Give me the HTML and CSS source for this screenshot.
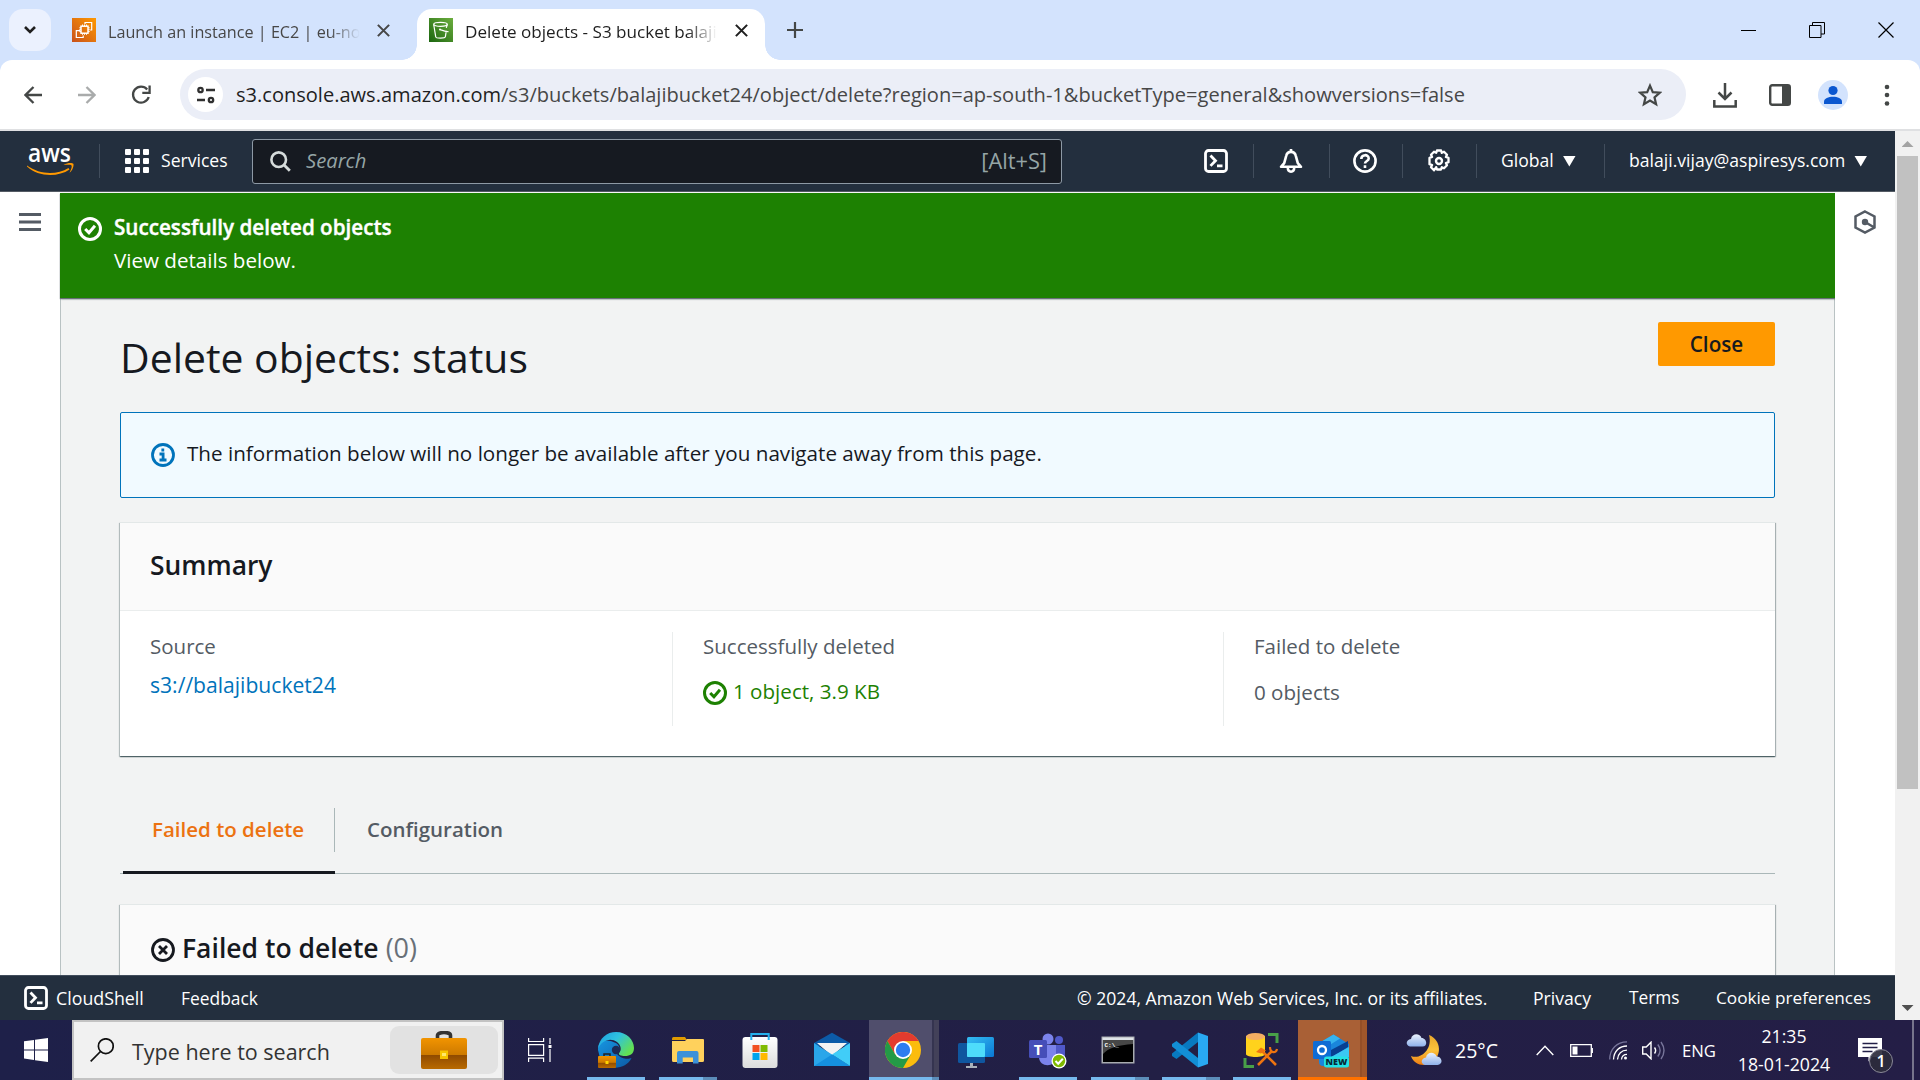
FILE: index.html
```html
<!DOCTYPE html>
<html lang="en">
<head>
<meta charset="utf-8">
<title>Delete objects - S3 bucket balajibucket24</title>
<link rel="stylesheet" href="styles.css">
</head>
<body>
<svg class="defs" aria-hidden="true">
  <defs>
    <symbol id="check-circle" viewBox="0 0 16 16"><g fill="none" stroke="currentColor" stroke-width="2"><circle cx="8" cy="8" r="7"/><path d="M4.800 8l2.500 2.500 4-4.600"/></g></symbol>
    <symbol id="shell" viewBox="0 0 24 24"><rect x="1.500" y="1.500" width="21" height="21" rx="3" fill="none" stroke="currentColor" stroke-width="2.800"/><path d="M6.500 6.500l5 5.200-5 5.200M13 16.800h5.500" fill="none" stroke="currentColor" stroke-width="2.800"/></symbol>
    <symbol id="close" viewBox="0 0 16 16"><path d="M2 2l12 12M14 2L2 14" fill="none" stroke="currentColor" stroke-width="2.200"/></symbol>
    <linearGradient id="gOrange" x1="0" y1="1" x2="1" y2="0"><stop offset="0" stop-color="#c8511b"/><stop offset="1" stop-color="#f90"/></linearGradient>
    <linearGradient id="gGreen" x1="0" y1="1" x2="1" y2="0"><stop offset="0" stop-color="#1b660f"/><stop offset="1" stop-color="#6cae3e"/></linearGradient>
    <linearGradient id="gCase" x1="0" y1="0" x2="0" y2="1"><stop offset="0" stop-color="#f29400"/><stop offset=".54" stop-color="#cd7a00"/><stop offset=".55" stop-color="#8f4a00"/><stop offset="1" stop-color="#b96a00"/></linearGradient>
    <linearGradient id="gEdge" x1="0" y1="0" x2="1" y2=".6"><stop offset="0" stop-color="#1b9de2"/><stop offset=".5" stop-color="#2fc2df"/><stop offset="1" stop-color="#63e052"/></linearGradient>
    <linearGradient id="gEdge2" x1="0" y1="0" x2="1" y2="1"><stop offset="0" stop-color="#1695e0"/><stop offset="1" stop-color="#0c59a4"/></linearGradient>
    <linearGradient id="gSky" x1="0" y1="0" x2="1" y2="1"><stop offset="0" stop-color="#35bdf2"/><stop offset="1" stop-color="#0a78d4"/></linearGradient>
    <linearGradient id="gCloud" x1="0" y1="0" x2="0" y2="1"><stop offset="0" stop-color="#e9f1fd"/><stop offset="1" stop-color="#8fb1ea"/></linearGradient>
    <linearGradient id="gMoon" x1="0" y1="0" x2="0" y2="1"><stop offset="0" stop-color="#e9a72b"/><stop offset=".5" stop-color="#fbc33c"/><stop offset="1" stop-color="#ee7d12"/></linearGradient>
    <linearGradient id="gBag" x1="0" y1="0" x2="0" y2="1"><stop offset="0" stop-color="#fff"/><stop offset="1" stop-color="#dcdcdc"/></linearGradient>
  </defs>
</svg>

<header class="tabstrip">
  <button class="tab-search"><svg width="14" height="10" viewBox="0 0 14 10"><path d="M2 2l5 5 5-5" fill="none" stroke="#1f1f1f" stroke-width="2.600"/></svg></button>
  <div class="tab tab-idle">
    <svg width="24" height="24" viewBox="0 0 24 24"><rect width="24" height="24" fill="url(#gOrange)"/><g fill="none" stroke="#fff" stroke-width="1.200"><rect x="9" y="8.200" width="7" height="7" stroke-width="1.500"/><path d="M10.500 6.500v1.500M12.500 6.500v1.500M14.500 6.500v1.500M10.500 15.200v1.600M12.500 15.200v1.600M14.500 15.200v1.600M7.300 9.800H9M7.300 11.700H9M7.300 13.600H9M16 9.800h1.700M16 11.700h1.700M16 13.600h1.700" stroke-width="1"/><path d="M13 6V4.500h6.700V12h-1.500M8 12.700H4.300v6.800h6.900V17.500"/></g></svg>
    <span class="tab-title">Launch an instance | EC2 | eu-north-1</span>
    <svg class="x" width="15" height="15"><use href="#close"/></svg>
  </div>
  <div class="tab tab-active">
    <svg width="24" height="24" viewBox="0 0 24 24"><rect width="24" height="24" fill="url(#gGreen)"/><g fill="none" stroke="#fff" stroke-width="1.200"><ellipse cx="11.500" cy="6.300" rx="6.800" ry="2"/><path d="M4.700 6.500l2 12.200c.2 1.900 9.400 1.900 9.700 0l.9-6M17.300 9.800l1-3.500M11 11.500c3 1 5.500 2.100 8.500 2.200"/></g><circle cx="11" cy="11.500" r="1" fill="#fff"/></svg>
    <span class="tab-title">Delete objects - S3 bucket balajibucket24</span>
    <svg class="x" width="15" height="15"><use href="#close"/></svg>
  </div>
  <svg class="plus" width="16" height="16"><path d="M8 0v16M0 8h16" stroke="#444746" stroke-width="2.200"/></svg>
  <div class="window-controls">
    <svg width="15" height="16"><path d="M0 8.500h15" stroke="#000"/></svg>
    <svg width="16" height="16"><path d="M.5 3.500h11.500v12H.5zM3.500 3.500v-3H15.500v11.500H12" fill="none" stroke="#000"/></svg>
    <svg width="16" height="16"><path d="M.5 .5l15 15M15.500 .5l-15 15" stroke="#000" stroke-width="1.200"/></svg>
  </div>
</header>

<nav class="toolbar">
  <svg class="nav-back" width="18" height="18" viewBox="0 0 18 18"><path d="M18 9H2M9.500 1L1.500 9l8 8" fill="none" stroke="#444746" stroke-width="2.300"/></svg>
  <svg class="nav-fwd" width="18" height="18" viewBox="0 0 18 18"><path d="M0 9h16M8.500 1l8 8-8 8" fill="none" stroke="#a9abab" stroke-width="2.300"/></svg>
  <svg class="nav-reload" width="20" height="20" viewBox="0 0 20 20"><path d="M16.200 4.500A8 8 0 1 0 17.700 12" fill="none" stroke="#444746" stroke-width="2.300"/><path d="M18.600 .5v7.300h-7.300" fill="none" stroke="#444746" stroke-width="2.300"/></svg>
  <div class="omnibox">
    <span class="site-info"><svg width="18" height="18" viewBox="0 0 18 18" fill="none" stroke="#303030" stroke-width="2.300"><circle cx="3.500" cy="4" r="2.200"/><path d="M9 4h9M0 14h8"/><circle cx="14" cy="14" r="2.200"/></svg></span>
    <span class="url">s3.console.aws.amazon.com<span class="path">/s3/buckets/balajibucket24/object/delete?region=ap-south-1&amp;bucketType=general&amp;showversions=false</span></span>
    <svg class="star" width="24" height="24" viewBox="0 0 24 24"><path d="M12 2.600l2.800 6.500 7 .6-5.300 4.600 1.600 6.900-6.100-3.700-6.100 3.700 1.600-6.900-5.300-4.600 7-.6z" fill="none" stroke="#444746" stroke-width="2.200"/></svg>
  </div>
  <div class="toolbar-icons">
    <svg width="24" height="26" viewBox="0 0 24 26"><path d="M12 1v15M5.500 10.500l6.500 6.500 6.500-6.500M1.300 18v6.500h21.400V18" fill="none" stroke="#444746" stroke-width="2.500"/></svg>
    <svg width="22" height="22" viewBox="0 0 22 22"><rect x="1.200" y="1.200" width="19.600" height="19.600" rx="2" fill="none" stroke="#444746" stroke-width="2.400"/><path d="M13 1h8v20h-8z" fill="#444746"/></svg>
    <svg width="30" height="30" viewBox="0 0 30 30"><circle cx="15" cy="15" r="15" fill="#d3e3fd"/><circle cx="15" cy="10.500" r="4.600" fill="#0b57d0"/><path d="M6 24v-2.500C6 15 24 15 24 21.500V24z" fill="#0b57d0"/></svg>
    <svg width="6" height="22" viewBox="0 0 6 22" fill="#444746"><circle cx="3" cy="3" r="2.300"/><circle cx="3" cy="11" r="2.300"/><circle cx="3" cy="19.500" r="2.300"/></svg>
  </div>
</nav>

<div class="viewport">
  <div class="page">
    <header class="aws-nav">
      <svg class="aws-logo" width="48" height="32" viewBox="0 0 48 32"><text x="1" y="16.500" textLength="43" lengthAdjust="spacingAndGlyphs" class="aws-word">aws</text><path d="M0 20.500c13 9.500 30 9.500 41.500 2.500l1 1.500C31 32.500 11 32 0 21.500z" fill="#f90"/><path d="M36.500 20c4-2.500 9-2.200 9.800-1.200s-.4 6.700-3.800 9c2-4 2.600-6.500 2-7.300s-4.500-.8-8-.5z" fill="#f90"/></svg>
      <i class="sep"></i>
      <svg class="grid-icon" width="24" height="24" fill="#fff"><rect width="6" height="6" rx="1"/><rect x="9" width="6" height="6" rx="1"/><rect x="18" width="6" height="6" rx="1"/><rect y="9" width="6" height="6" rx="1"/><rect x="9" y="9" width="6" height="6" rx="1"/><rect x="18" y="9" width="6" height="6" rx="1"/><rect y="18" width="6" height="6" rx="1"/><rect x="9" y="18" width="6" height="6" rx="1"/><rect x="18" y="18" width="6" height="6" rx="1"/></svg>
      <span class="services">Services</span>
      <div class="search">
        <svg width="21" height="21" viewBox="0 0 21 21"><circle cx="8.700" cy="8.700" r="7.300" fill="none" stroke="#d5dbdb" stroke-width="2.600"/><path d="M13.800 13.800l6 6" stroke="#d5dbdb" stroke-width="2.800"/></svg>
        <em>Search</em><span>[Alt+S]</span>
      </div>
      <div class="nav-cell shell"><svg width="24" height="24"><use href="#shell"/></svg></div>
      <div class="nav-cell bell"><svg width="24" height="24" viewBox="0 0 24 24" fill="none" stroke="#fff" stroke-width="2.600"><path d="M2 17.800l3.200-3.600 2-7.400C8.500 1.500 15.500 1.500 16.800 6.800l2 7.400 3.200 3.600z" stroke-linejoin="round"/><path d="M8.800 18.500c0 5.500 6.400 5.500 6.400 0M12 0v3"/></svg></div>
      <div class="nav-cell help"><svg width="24" height="24" viewBox="0 0 24 24" fill="none" stroke="#fff" stroke-width="2.600"><circle cx="12" cy="12" r="10.600"/><path d="M8.300 10c0-5 7.400-5 7.400-.6 0 2.600-3.700 2.600-3.700 5.200M12 16.300v2.600"/></svg></div>
      <div class="nav-cell gear"><svg width="24" height="24" viewBox="0 0 24 24" fill="none" stroke="#fff"><path d="M9.900 1.500h4.200l.7 2.300 2.200-1.100 3 3-1.100 2.200 2.600.9v4.400l-2.600.9 1.100 2.200-3 3-2.200-1.100-.7 2.300H9.900l-.7-2.300L7 21.300l-3-3 1.100-2.200-2.600-.9V8.800l2.600-.9L4 5.700l3-3 2.200 1.100z" stroke-width="2.300" stroke-linejoin="round"/><circle cx="12" cy="12" r="3" stroke-width="2.400"/></svg></div>
      <div class="nav-cell region"><span>Global</span><i class="caret"></i></div>
      <div class="account"><span>balaji.vijay@aspiresys.com</span><i class="caret"></i></div>
    </header>

    <div class="shell-row">
      <aside class="rail"><svg width="22" height="18" class="burger"><path d="M0 1.500h22M0 9h22M0 16.500h22" stroke="#545b64" stroke-width="2.800"/></svg></aside>
      <main class="content">
        <section class="flash">
          <svg width="24" height="24"><use href="#check-circle"/></svg>
          <div><strong>Successfully deleted objects</strong><p>View details below.</p></div>
        </section>
        <div class="body">
          <div class="title-row"><h1>Delete objects: status</h1><button class="primary">Close</button></div>
          <div class="alert">
            <svg width="24" height="24" viewBox="0 0 24 24" fill="none" stroke="#0073bb" stroke-width="2.800"><circle cx="12" cy="12" r="10.500"/><path d="M11.800 5.500v3M8.500 11h3.600v6M8.500 17h7"/></svg>
            <span>The information below will no longer be available after you navigate away from this page.</span>
          </div>
          <section class="card summary">
            <h2>Summary</h2>
            <div class="cols">
              <div class="col"><label>Source</label><a>s3://balajibucket24</a></div>
              <div class="col"><label>Successfully deleted</label><p class="ok"><svg width="24" height="24"><use href="#check-circle"/></svg><span>1 object, 3.9 KB</span></p></div>
              <div class="col"><label>Failed to delete</label><p>0 objects</p></div>
            </div>
          </section>
          <div class="tabs"><div class="t t-on"><span>Failed to delete</span></div><div class="t"><span>Configuration</span></div></div>
          <section class="card failed">
            <h2><svg width="24" height="24" viewBox="0 0 24 24" fill="none" stroke="#16191f" stroke-width="2.800"><circle cx="12" cy="12" r="10.500"/><path d="M8 8l8 8M16 8l-8 8"/></svg>Failed to delete <small>(0)</small></h2>
          </section>
        </div>
      </main>
      <aside class="rail rail-right"><svg width="22" height="24" viewBox="0 0 22 24" fill="none" stroke="#545b64" stroke-width="2.500"><path d="M11 1.500l9.500 5v11L11 22.500l-9.500-5v-11zM11 12l8.500 5"/><circle cx="11" cy="12" r="3.200" fill="#545b64" stroke="none"/></svg></aside>
    </div>

    <footer class="aws-footer">
      <svg width="24" height="24"><use href="#shell"/></svg>
      <span class="cs">CloudShell</span><span class="fb">Feedback</span>
      <span class="copy">© 2024, Amazon Web Services, Inc. or its affiliates.</span>
      <span class="pv">Privacy</span><span class="tm">Terms</span><span class="ck">Cookie preferences</span>
    </footer>
  </div>
  <div class="scrollbar"><i class="up"></i><div class="thumb"></div><i class="down"></i></div>
</div>

<div class="taskbar">
  <div class="start"><svg width="24" height="24" viewBox="0 0 24 24" fill="#fff"><path d="M0 3.300l10-1.400v9.500H0zM11 1.700L24 0v11.400H11zM0 12.500h10V22L0 20.600zM11 12.500h13V24l-13-1.800z"/></svg></div>
  <div class="tsearch">
    <svg width="24" height="24" viewBox="0 0 24 24" fill="none" stroke="#111" stroke-width="1.700"><circle cx="15.800" cy="8.200" r="7.400"/><path d="M10.500 13.500L.7 23.300"/></svg>
    <span>Type here to search</span>
    <div class="pill"><svg width="46" height="38" viewBox="0 0 46 38"><path d="M16.500 8V4.500c0-4 13-4 13 0V8" fill="none" stroke="#333" stroke-width="3.600"/><rect y="7" width="46" height="31" rx="2" fill="url(#gCase)"/><rect x="19" y="19.500" width="8" height="8.500" fill="#f7c600"/><rect x="21" y="22" width="4" height="3" fill="#ffe96b"/></svg></div>
  </div>
  <svg class="taskview" width="24" height="24" viewBox="0 0 24 24" fill="none" stroke="#fff" stroke-width="1.200"><path d="M.6 0v3.500h15V0M.6 24v-3.800h15V24M.6 6.700h15v10.600H.6zM22 0v6M22 11v13"/><path d="M20.500 7h3v3h-3z" fill="#fff" stroke="none"/></svg>
  <div class="apps">
    <div class="app run"><svg width="36" height="36" viewBox="0 0 36 36"><path d="M0 18C0 5 12 8 18 11c5 3 4 10 1 11 5 6 12 5 14.500 4C28 38 8 40 2 26z" fill="url(#gEdge2)"/><path d="M0 17C1 6 9 0 18 0c11 0 18 8 18 16 0 6-4 8-9 8-4 0-7-1-6-3 3-3 2-8-2-11C12 5 3 9 0 17z" fill="url(#gEdge)"/><circle cx="18" cy="18" r="4.200" fill="#1c2a55"/><path d="M6 24v-2h6v2" fill="none" stroke="#222" stroke-width="1.500"/><rect y="24" width="18" height="12" rx="1" fill="url(#gCase)"/><rect x="7.500" y="29" width="3" height="3" fill="#ffd400"/></svg></div>
    <div class="app run multi"><svg width="36" height="36" viewBox="0 0 36 36"><path d="M2 6.500Q2 5 3.500 5H15l2 3H2z" fill="#e09b00"/><path d="M2 9h13l2-2h16q1 0 1 1v20.500q0 1.500-1.500 1.500h-29Q2 30 2 28.500z" fill="#ffd15c"/><path d="M7 31.500V21q0-2 2-2h17.500q2 0 2 2v10.500H23V25.500H12.700v6z" fill="#3c91d9"/></svg></div>
    <div class="app"><svg width="36" height="36" viewBox="0 0 36 36"><rect x=".5" y="5" width="35" height="31" rx="3" fill="url(#gBag)"/><path d="M9.300 8V2h17.400v6" fill="none" stroke="#24b0ec" stroke-width="2"/><path d="M10.500 13h7v7h-7z" fill="#f25022"/><path d="M18.500 13h7v7h-7z" fill="#7fba00"/><path d="M10.500 21h7v7h-7z" fill="#00a4ef"/><path d="M18.500 21h7v7h-7z" fill="#ffb900"/></svg></div>
    <div class="app"><svg width="36" height="36" viewBox="0 0 36 36"><path d="M0 11L18 .8 36 11v3H0z" fill="#0c5ba8"/><path d="M3 11h30L18 24z" fill="#f3f3f3"/><path d="M0 11l18 11.500L36 34H0z" fill="#2aa6ea"/><path d="M36 11v23L18 22.500z" fill="#41cdf8"/><path d="M0 34l18-11.500L36 34z" fill="#1590df"/></svg></div>
    <div class="app active"><svg width="36" height="36" viewBox="0 0 36 36"><circle cx="18" cy="18" r="18" fill="#fbbc0d"/><path d="M18 9h15.600A18 18 0 0 0 2.400 9L10.200 22.500 18 18z" fill="#e33b2e"/><path d="M2.400 9A18 18 0 0 0 18 36l7.800-13.500L18 18l-7.800 4.500z" fill="#249a47"/><circle cx="18" cy="18" r="9" fill="#fff"/><circle cx="18" cy="18" r="7.200" fill="#2d7df0"/></svg></div>
    <div class="app"><svg width="36" height="36" viewBox="0 0 36 36"><rect y="11" width="27" height="20" rx="1.500" fill="#0f569f"/><rect x="9" y="5" width="27" height="20" rx="1.500" fill="url(#gSky)"/><rect x="9" y="11" width="18" height="14" rx="1" fill="#4edcfb"/><path d="M12 31h3v3h4v2H8v-2h4z" fill="#a9b2ba"/></svg></div>
    <div class="app run teams"><svg width="38" height="38" viewBox="0 0 38 38"><circle cx="19" cy="8" r="5.500" fill="#7b83eb"/><circle cx="30" cy="9" r="4" fill="#5059c9"/><path d="M24 14h12v10c0 8-12 8-12 0z" fill="#5059c9"/><path d="M10 14h17v12c0 11-17 11-17 0z" fill="#7b83eb"/><rect x="0" y="9" width="18" height="18" rx="1.500" fill="#464eb8"/><text x="9" y="23.500" text-anchor="middle" class="glyph" fill="#fff">T</text><circle cx="30" cy="30" r="7.500" fill="#fff"/><circle cx="30" cy="30" r="6.200" fill="#7fba00"/><path d="M26.500 30l2.700 2.700 4.600-5" fill="none" stroke="#fff" stroke-width="2"/></svg></div>
    <div class="app run multi cmd"><svg width="36" height="36" viewBox="0 0 36 36"><rect x="1.500" y="4.500" width="33" height="27" fill="#a8acb0"/><rect x="2.500" y="5.500" width="31" height="2.500" fill="#dfe4e8"/><rect x="3" y="8" width="30" height="22" fill="#000"/><path d="M3 8h30v4C18 13 8 16 3 22z" fill="#474747"/><text x="4.500" y="14.500" class="prompt" fill="#fff">C:\_</text></svg></div>
    <div class="app run multi"><svg width="36" height="36" viewBox="0 0 36 36"><path d="M26 .5L36 4v28l-10 3.500z" fill="#29a9f2"/><path d="M26 .5V10L4.500 27 0 24v-2.500z" fill="#0879bf"/><path d="M26 35.500V26L4.500 9 0 12v2.500z" fill="#128fd6"/></svg></div>
    <div class="app run"><svg width="36" height="36" viewBox="0 0 36 36"><path d="M25 2.500h9V11M2 26v8.500h9" fill="none" stroke="#48a048" stroke-width="3"/><path d="M3 4v18c0 4 19 4 19 0V4z" fill="#ffd21c"/><ellipse cx="12.500" cy="4.500" rx="9.500" ry="3.500" fill="#f4ae62"/><path d="M15 33l14-14M33 33L18 18" stroke="#ee7410" stroke-width="2.600"/><path d="M13 20l5-4.500 5 3-5 3z" fill="#ee7410"/><path d="M27 15c0 6 6 7 7 2" fill="none" stroke="#ee7410" stroke-width="2.200"/></svg></div>
    <div class="app alerting"><svg width="36" height="36" viewBox="0 0 36 36"><path d="M6 11L20.500 2.500 36 12v18c0 3-2 4-4 4H10c-3 0-4-2-4-4z" fill="#1a86dc"/><path d="M6 11L20.500 2.500 27 6.500 12 16z" fill="#36b3ef"/><path d="M18 18L35 9v6L18 26z" fill="#083f91"/><path d="M18 25l18-10v10z" fill="#3bc8f4"/><rect y="9" width="18" height="18" rx="1.500" fill="#0f6cd4"/><circle cx="9" cy="18" r="4" fill="none" stroke="#fff" stroke-width="2.300"/><rect x="11" y="24.500" width="25" height="11" rx="2.500" fill="#22e2e4"/><text x="23.500" y="33.200" text-anchor="middle" class="new" fill="#052a38">NEW</text></svg></div>
  </div>
  <svg class="weather" width="37" height="36" viewBox="0 0 37 36"><path d="M23 3c13 5 13 22 2 28-7 4-17 2-20-7 10 4 22-7 18-21z" fill="url(#gMoon)"/><path d="M4 14.500c-5-1-4-7 1-7.500 1-6 9-6 10.500-1 5 0 7 8 1 8.500z" fill="url(#gCloud)"/><path d="M19 33c-5-1-4-7 1-7.500 1-6 9-6 10.500-1 6 0 7 8 1 8.500z" fill="url(#gCloud)"/></svg>
  <span class="temp">25°C</span>
  <svg class="chev" width="18" height="11" viewBox="0 0 18 11"><path d="M.7 10L9 1.300l8.300 8.700" fill="none" stroke="#fff" stroke-width="1.400"/></svg>
  <svg class="batt" width="23" height="13" viewBox="0 0 23 13"><path d="M.7 .7h20.600v11.600H.7z" fill="none" stroke="#fff" stroke-width="1.300"/><path d="M22.300 4v5" stroke="#fff" stroke-width="1.300"/><path d="M2.500 2.500h5v8h-5z" fill="#fff"/></svg>
  <svg class="wifi" width="19" height="19" viewBox="0 0 19 19" fill="none" stroke-width="1.300"><path d="M.7 18.500C.7 8 8 .8 18 .8" stroke="#77759a"/><path d="M4.500 18.500C5 10 10.500 5 18 5M8.500 18.500c.3-5.500 4-9.300 9.500-9.300M12.500 18.500c.3-3.300 2.400-5.200 5.500-5.200" stroke="#fff"/><circle cx="16.500" cy="17" r="1.500" fill="#fff"/></svg>
  <svg class="vol" width="23" height="19" viewBox="0 0 23 19" fill="none" stroke-width="1.400"><path d="M.7 6h3.500L9 1.200v16.600L4.200 13H.7z" stroke="#fff"/><path d="M12.500 6.500q2.300 3 0 6" stroke="#fff"/><path d="M15.800 3.500q4.600 6 0 12M19 1q6 8.500 0 17" stroke="#77759a"/></svg>
  <span class="lang">ENG</span>
  <div class="clock"><span>21:35</span><span>18-01-2024</span></div>
  <div class="notif"><svg width="24" height="24" viewBox="0 0 24 24"><path d="M0 0h24v19h-9.500l-4 4.500V19H0z" fill="#fff"/><path d="M4.500 5.500h15M4.500 9.500h15M4.500 13.500h10" stroke="#221f47" stroke-width="1.300"/></svg><b>1</b></div>
  <i class="desk"></i>
</div>
</body>
</html>
```
FILE: styles.css
```css
* { box-sizing: border-box; margin: 0; padding: 0; }
body {
  width: 1920px; height: 1080px; overflow: hidden;
  display: flex; flex-direction: column;
  font-family: "Open Sans", "Noto Sans", sans-serif;
  font-size: 20.6px; color: #16191f; background: #d3e3fd; white-space: nowrap;
}
svg { display: block; flex: none; }
button { border: 0; font: inherit; }
i { font-style: normal; }
.defs { position: absolute; width: 0; height: 0; }

/* browser tab strip */
.tabstrip { height: 60px; flex: none; display: flex; align-items: center; padding-left: 9px; background: #d3e3fd; }
.tab-search { width: 42px; height: 42px; border-radius: 14px; background: #ebf1fe; display: grid; place-items: center; }
.tab { display: flex; align-items: center; height: 51px; margin-top: 9px; position: relative; padding-bottom: 9px; }
.tab-idle { width: 345px; margin-left: 21px; color: #474747; font-size: 16.2px; }
.tab-active { width: 348px; padding-left: 12px; background: #fff; border-radius: 15px 15px 0 0; color: #1f1f1f; font-size: 17.1px; }
.tab-active::before, .tab-active::after { content: ""; position: absolute; bottom: 0; width: 15px; height: 15px; }
.tab-active::before { left: -15px; background: radial-gradient(circle at 0 0, transparent 14.5px, #fff 15px); }
.tab-active::after { right: -15px; background: radial-gradient(circle at 100% 0, transparent 14.5px, #fff 15px); }
.tab-title { width: 252px; margin-left: 12px; overflow: hidden; line-height: 28px; padding-top: 4px; -webkit-mask-image: linear-gradient(90deg, #000 88%, transparent 100%); mask-image: linear-gradient(90deg, #000 88%, transparent 100%); }
.tab .x { margin-left: 16px; }
.tab-active .x { margin-left: 17px; }
.plus { margin-left: 22px; }
.window-controls { display: flex; gap: 53px; margin-left: auto; margin-right: 26px; }

/* address bar */
.toolbar { height: 71px; flex: none; display: flex; align-items: center; background: #fff; border-radius: 12px 12px 0 0; border-bottom: 2px solid #dfe0e2; padding-left: 24px; }
.nav-fwd { margin-left: 36px; }
.nav-reload { margin-left: 35px; }
.omnibox { width: 1506px; height: 51px; margin-left: 29px; border-radius: 26px; background: #ebeef7; display: flex; align-items: center; padding-left: 8px; }
.site-info { width: 35px; height: 35px; border-radius: 50%; background: #fff; display: grid; place-items: center; }
.url { width: 1232px; margin-left: 13px; font-size: 20.06px; color: #1f1f1f; }
.path { color: #474747; }
.star { margin-left: auto; margin-right: 24px; }
.toolbar-icons { display: flex; align-items: center; margin-left: 27px; }
.toolbar-icons svg + svg { margin-left: 32px; }
.toolbar-icons svg:nth-child(3) { margin-left: 27px; }
.toolbar-icons svg:nth-child(4) { margin-left: 36px; }

.viewport { height: 889px; flex: none; display: flex; background: #fff; }
.page { width: 1895px; display: flex; flex-direction: column; }

/* console navigation */
.aws-nav { height: 61px; flex: none; display: flex; align-items: center; background: #232f3e; border-bottom: 1px solid #545b64; color: #fff; font-size: 17.6px; font-weight: 500; padding-left: 27px; }
.aws-logo { overflow: visible; }
.aws-word { font: 600 26px "Open Sans", sans-serif; fill: #fff; }
.sep { width: 1px; height: 34px; background: #414d5c; margin-left: 24px; }
.grid-icon { margin-left: 25px; }
.services { width: 91px; padding: 0 0 2px 12px; }
.search { width: 810px; height: 45px; border: 1px solid #8d99a5; border-radius: 3px; background: #161a21; display: flex; align-items: center; margin-left: 12px; padding: 0 14px 0 17px; color: #95a5a6; font-size: 21.8px; font-weight: 400; }
.search em { margin-left: 15px; font-size: 20.2px; padding-bottom: 2px; }
.search span { margin-left: auto; padding-bottom: 2px; }
.nav-cell { height: 34px; display: flex; align-items: center; border-right: 1px solid #414d5c; }
.shell { width: 192px; padding-left: 142px; }
.bell { width: 76px; padding-left: 25px; }
.help { width: 73px; padding-left: 23px; }
.gear { width: 74px; padding-left: 24px; }
.region { width: 128px; padding-left: 24px; }
.region span, .account span { padding-bottom: 2px; }
.account { display: flex; align-items: center; padding-left: 24px; }
.caret { width: 13px; height: 11px; background: #fff; clip-path: polygon(0 0, 100% 0, 50% 100%); margin-left: 9px; }

/* page frame */
.shell-row { height: 783px; flex: none; display: flex; overflow: hidden; }
.rail { width: 60px; flex: none; padding: 21px 0 0 19px; background: #fff; }
.rail-right { padding: 18px 0 0 19px; }
.content { width: 1775px; background: #f2f3f3; border-top: 1px solid #fff; box-shadow: inset 1px 0 #b9c2c3, inset -1px 0 #b9c2c3; }
.flash { height: 105px; background: #1d8102; color: #fff; display: flex; padding: 18px 0 0 18px; line-height: 33px; box-shadow: 0 1px 1px #687078, 1px 1px 2px rgba(0,28,36,.4); }
.flash svg { margin-top: 6px; }
.flash div { margin-left: 12px; }
.flash strong { display: block; font-size: 20.65px; font-weight: 600; -webkit-text-stroke: .4px #fff; }
.flash p { font-size: 20.6px; }
.body { padding: 24px 60px 0; }

.title-row { display: flex; justify-content: space-between; height: 90px; }
h1 { font-size: 40.9px; font-weight: 400; line-height: 70px; }
.primary { width: 117px; height: 44px; background: #f90; border-radius: 2px; font-weight: 600; font-size: 20.7px; color: #16191f; line-height: 44px; }
.alert { height: 86px; border: 1px solid #0073bb; border-radius: 2px; background: #f1faff; display: flex; align-items: center; padding: 0 0 2px 30px; font-size: 20.63px; }
.alert svg { margin-top: 2px; }
.alert span { margin-left: 12px; padding-bottom: 2px; }

/* cards */
.card { background: #fff; box-shadow: 0 1px 1px rgba(0,28,36,.45), 1px 1px 1px rgba(0,28,36,.25), -1px 1px 1px rgba(0,28,36,.2); border-top: 1px solid #e3e8e8; }
h2 { font-size: 26.4px; font-weight: 600; height: 88px; padding-left: 30px; background: #fafafa; border-bottom: 1px solid #eaeded; }
.summary { height: 234px; margin-top: 24px; }
.summary h2 { line-height: 84px; }
.cols { display: flex; padding-top: 21px; }
.col { height: 94px; padding-left: 30px; color: #545b64; line-height: 28px; border-left: 1px solid #eaeded; width: 551px; }
.col:first-child { width: 552px; border-left: 0; }
.col label { display: block; font-size: 20.5px; }
.col a { display: block; color: #0073bb; line-height: 30px; margin-top: 10px; font-size: 21.1px; }
.col p { margin-top: 18px; }
.col .ok { display: flex; align-items: flex-start; margin-top: 17px; color: #1d8102; }
.ok svg { margin-top: 4px; }
.ok span { margin-left: 6px; }

.tabs { display: flex; height: 68px; margin: 50px 0 30px; border-bottom: 1px solid #aab7b8; align-items: flex-start; }
.t { height: 68px; padding-left: 32px; font-size: 20.5px; font-weight: 600; line-height: 46px; color: #545b64; }
.t-on { width: 212px; margin-left: 3px; padding-left: 29px; color: #ec7211; border-bottom: 3px solid #16191f; background: linear-gradient(#aab7b8, #aab7b8) 100% 2px / 1px 44px no-repeat; }
.failed { height: 120px; }
.failed h2 { display: flex; align-items: center; line-height: 36px; height: 85px; border: 0; font-size: 26.5px; }
.failed svg { margin: 4px 7px 0 1px; }
.failed small { font-size: 27px; font-weight: 400; color: #687078; margin-left: 7px; }

/* console footer */
.aws-footer { height: 45px; display: flex; align-items: center; background: #232f3e; border-top: 1px solid #414d5c; color: #fff; font-size: 17.6px; font-weight: 500; padding-left: 24px; }
.aws-footer span { padding-bottom: 1px; }
.aws-footer .cs { width: 133px; padding: 0 0 0 8px; font-size: 17.8px; }
.fb { width: 896px; font-size: 17.4px; }
.copy { width: 456px; }
.pv { width: 96px; }
.tm { width: 87px; font-size: 17.3px; }
.ck { font-size: 17.2px; }

.scrollbar { width: 25px; background: #f1f1f1; display: flex; flex-direction: column; align-items: center; }
.up { width: 12px; height: 6px; margin: 10px 0 9px; background: #a3a3a3; clip-path: polygon(50% 0, 100% 100%, 0 100%); }
.thumb { width: 21px; height: 633px; background: #c1c1c1; }
.down { width: 12px; height: 6px; margin-top: 216px; background: #505050; clip-path: polygon(0 0, 100% 0, 50% 100%); }

/* desktop taskbar */
.taskbar { height: 60px; flex: none; display: flex; align-items: center; background: linear-gradient(90deg, #1e2049, #221f45 60%, #241e46); color: #fff; }
.start { width: 72px; padding-left: 24px; }
.tsearch { width: 432px; height: 60px; border: 2px solid #c3c3c3; background: #f1f1f1; display: flex; align-items: center; padding-left: 16px; font-size: 21.5px; color: #333; }
.tsearch span { margin-left: 18px; width: 258px; padding-top: 2px; }
.pill { width: 108px; height: 48px; border-radius: 9px; background: #e2e2e2; display: grid; place-items: center; }
.taskview { margin: 0 28px 0 24px; }
.apps { display: grid; grid-template-columns: repeat(7, 72px) repeat(4, 71px); height: 60px; }
.app { display: grid; place-items: center; position: relative; }
.run::after { content: ""; position: absolute; left: 7px; bottom: 0; width: 58px; height: 3px; background: #76b9ed; }
.multi::after { background: linear-gradient(90deg, #76b9ed 44px, #5c8db9 44px); }
.active { background: linear-gradient(90deg, #504e6c 63px, #353450 63px 65px, #434159 65px) 1px 0 / 70px 57px no-repeat, linear-gradient(90deg, #76b9ed 63px, #5c8db9 63px) 1px 57px / 70px 3px no-repeat; }
.active svg, .run.multi ~ .run svg { margin-right: 2px; }
.app.run.teams svg { margin-right: 0; }
.app.run.cmd svg { margin-right: 3px; }
.alerting { background: linear-gradient(90deg, #a96036 62px, #944f27 62px 64px, #a0572b 64px) 1px 0 / 69px 57px no-repeat, linear-gradient(#ff7200, #ff7200) 1px 57px / 69px 3px no-repeat; }
.alerting svg { margin-right: 3px; }
.glyph { font: 700 15px "Open Sans", sans-serif; }
.prompt { font: 700 6px "Liberation Mono", monospace; }
.new { font: 800 9px "Open Sans", sans-serif; }
.weather { margin-left: 38px; }
.temp { width: 93px; padding: 1px 0 0 12px; font-size: 19.5px; }
.batt { margin-left: 16px; }
.wifi { margin-left: 16px; }
.vol { margin-left: 14px; }
.lang { width: 72px; padding-left: 17px; font-size: 16.7px; }
.clock { width: 94px; display: flex; flex-direction: column; align-items: center; font-size: 17.7px; line-height: 28px; }
.notif { position: relative; margin-left: 27px; }
.notif b { position: absolute; left: 11px; top: 11px; width: 24px; height: 24px; border-radius: 50%; background: rgba(45,43,60,.92); border: 1px solid #8a8998; font-size: 16px; font-weight: 600; line-height: 22px; text-align: center; }
.desk { width: 2px; height: 60px; margin-left: 30px; background: #77758c; }
```
